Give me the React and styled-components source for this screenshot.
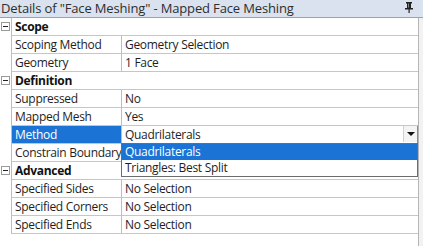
import React from 'react'
import styled, { createGlobalStyle } from 'styled-components'

const Global = createGlobalStyle`
  body {
    margin: 0;
    background: #ffffff;
  }
`;

// the value of "Constrain Boundary" sits under the open drop list, so it is left blank
const rows = [
  { group: 'Scope' },
  { label: 'Scoping Method', value: 'Geometry Selection' },
  { label: 'Geometry', value: '1 Face' },
  { group: 'Definition' },
  { label: 'Suppressed', value: 'No' },
  { label: 'Mapped Mesh', value: 'Yes' },
  { label: 'Method', value: 'Quadrilaterals', selected: true, combo: true },
  { label: 'Constrain Boundary', value: '' },
  { group: 'Advanced' },
  { label: 'Specified Sides', value: 'No Selection' },
  { label: 'Specified Corners', value: 'No Selection' },
  { label: 'Specified Ends', value: 'No Selection' },
];

function PinIcon() {
  return (
    <svg width="8" height="11" viewBox="0 0 8 11">
      <rect x="1" y="0" width="6" height="1.5" fill="#222" />
      <rect x="2" y="1" width="4" height="5" fill="#222" />
      <rect x="3" y="1.5" width="1" height="4" fill="#888" />
      <rect x="0" y="6" width="8" height="1.5" fill="#222" />
      <rect x="3.5" y="7" width="1.2" height="4" fill="#222" />
    </svg>
  );
}

function MinusBox() {
  return (
    <Expander>
      <span />
    </Expander>
  );
}

export default function App() {
  return (
    <Panel>
      <Global />
      <TitleBar>
        <span>Details of "Face Meshing" - Mapped Face Meshing</span>
        <PinIcon />
      </TitleBar>
      <Body>
        <Grid>
          {rows.map((r, i) =>
            r.group ? (
              <Row key={i}>
                <Gutter><MinusBox /></Gutter>
                <GroupCell>{r.group}</GroupCell>
              </Row>
            ) : (
              <Row key={i}>
                <Gutter />
                <LabelCell $selected={r.selected}>{r.label}</LabelCell>
                <ValueCell>
                  {r.combo ? (
                    <Combo>
                      <span>{r.value}</span>
                      <ComboButton>
                        <Arrow />
                      </ComboButton>
                      <DropList>
                        <Option $active>Quadrilaterals</Option>
                        <Option>Triangles: Best Split</Option>
                      </DropList>
                    </Combo>
                  ) : (
                    r.value
                  )}
                </ValueCell>
              </Row>
            )
          )}
        </Grid>
        <Edge />
      </Body>
    </Panel>
  );
}

const Panel = styled.div`
  width: 423px;
  height: 246px;
  background: #fff;
  font-family: 'Open Sans', 'Noto Sans', sans-serif;
  font-size: 12px;
  letter-spacing: -0.3px;
  color: #1e1e1e;
  overflow: hidden;
`;

const TitleBar = styled.div`
  height: 17px;
  background: #d9e2ee;
  border-bottom: 1px solid #9aa2ab;
  display: flex;
  align-items: center;
  justify-content: space-between;
  padding: 0 10px 0 1px;
  font-size: 13px;
  letter-spacing: -0.15px;
  color: #2e2e2e;
  line-height: 17px;
  svg {
    margin-top: -3px;
  }
`;

const Body = styled.div`
  display: flex;
`;

const Grid = styled.div`
  flex: 1;
  display: flex;
  flex-direction: column;
`;

const Edge = styled.div`
  width: 4px;
  height: 228px;
  background: #f2f2f2;
  border-left: 1px solid #b5b5b5;
`;

const Row = styled.div`
  display: grid;
  grid-template-columns: 11px 110px 1fr;
  height: 18px;
`;

const Gutter = styled.div`
  display: flex;
  align-items: center;
  justify-content: flex-start;
  padding-left: 1px;
`;

const Expander = styled.div`
  width: 7px;
  height: 7px;
  border: 1px solid #9a9a9a;
  background: #fff;
  display: flex;
  align-items: center;
  justify-content: center;
  margin-top: -1px;
  span {
    width: 5px;
    height: 1px;
    background: #222;
  }
`;

const Cell = styled.div`
  border-left: 1px solid #bdbdbd;
  border-bottom: 1px solid #c6c6c6;
  padding-left: 3px;
  line-height: 17px;
  white-space: nowrap;
  overflow: hidden;
`;

const GroupCell = styled(Cell)`
  grid-column: 2 / 4;
  font-weight: 700;
  color: #111;
`;

const LabelCell = styled(Cell)`
  background: ${p => (p.$selected ? '#1a73d5' : 'transparent')};
  color: ${p => (p.$selected ? '#fff' : '#1e1e1e')};
`;

const ValueCell = styled(Cell)`
  position: relative;
  overflow: visible;
`;

const Combo = styled.div`
  position: absolute;
  left: 0;
  right: 0;
  top: 0;
  bottom: 0;
  padding-left: 3px;
  border-right: 1px solid #8a8a8a;
  background: #fff;
`;

const ComboButton = styled.div`
  position: absolute;
  right: 0;
  top: 0;
  width: 13px;
  height: 16px;
  background: #f4f4f4;
  border-left: 1px solid #d0d0d0;
  display: flex;
  align-items: center;
  justify-content: center;
`;

const Arrow = styled.div`
  width: 0;
  height: 0;
  border-left: 4px solid transparent;
  border-right: 4px solid transparent;
  border-top: 4px solid #111;
`;

const DropList = styled.div`
  position: absolute;
  left: -1px;
  right: -1px;
  top: 17px;
  background: #fff;
  border: 1px solid #6d6d6d;
  z-index: 5;
`;

const Option = styled.div`
  height: 16px;
  line-height: 16px;
  padding-left: 3px;
  background: ${p => (p.$active ? '#1a73d5' : '#fff')};
  color: ${p => (p.$active ? '#fff' : '#1e1e1e')};
`;
